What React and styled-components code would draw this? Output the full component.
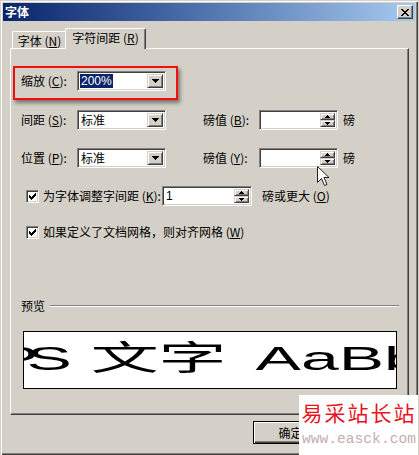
import React from "react";
import styled, { createGlobalStyle } from "styled-components";

const GlobalStyle = createGlobalStyle`
  html, body { margin: 0; padding: 0; background: #d4d0c8; }
  body {
    font-family: "Noto Sans CJK SC", "Liberation Sans", sans-serif;
    font-size: 12px;
    color: #000;
  }
  #root { width: 419px; height: 455px; overflow: hidden; }
`;

const Window = styled.div`
  position: relative;
  box-sizing: border-box;
  width: 418px;
  height: 455px;
  padding: 3px 3px 0 3px;
  background: #d4d0c8;
  box-shadow: inset 1px 1px 0 #d4d0c8, inset 2px 2px 0 #fff,
    inset -1px -1px 0 #404040, inset -2px -2px 0 #808080;
  display: flex;
  flex-direction: column;
  overflow: hidden;
`;

const TitleBar = styled.div`
  height: 18px;
  flex: none;
  display: flex;
  align-items: center;
  justify-content: space-between;
  padding: 0 2px 0 2px;
  background: linear-gradient(to right, #0a246a 0%, #3a5c9c 35%, #a6caf0 100%);
`;

const Title = styled.span`
  color: #fff;
  font-weight: bold;
  font-size: 12px;
  line-height: 18px;
`;

const CloseBtn = styled.div`
  box-sizing: border-box;
  width: 16px;
  height: 14px;
  background: #d4d0c8;
  border: 1px solid;
  border-color: #fff #404040 #404040 #fff;
  box-shadow: inset -1px -1px 0 #808080;
  display: flex;
  align-items: center;
  justify-content: center;
`;

const Body = styled.div`
  flex: 1;
  display: flex;
  flex-direction: column;
  padding: 7px 0 0 7px;
`;

const TabStrip = styled.div`
  display: flex;
  align-items: flex-start;
  height: 20px;
  padding-left: 2px;
  position: relative;
  z-index: 2;
`;

const Tab = styled.div`
  box-sizing: border-box;
  width: ${(p) => p.$w}px;
  height: ${(p) => (p.$active ? 21 : 17)}px;
  margin-top: ${(p) => (p.$active ? 0 : 3)}px;
  margin-left: ${(p) => (p.$active ? -2 : 0)}px;
  padding-bottom: ${(p) => (p.$active ? 3 : 0)}px;
  background: #d4d0c8;
  border-top: 1px solid #fff;
  border-left: 1px solid #fff;
  border-right: 1px solid #404040;
  box-shadow: inset -1px 0 0 #808080;
  border-radius: 2px 2px 0 0;
  display: flex;
  align-items: center;
  justify-content: center;
  white-space: nowrap;
  position: relative;
  z-index: ${(p) => (p.$active ? 3 : 1)};
`;

const Panel = styled.div`
  position: relative;
  z-index: 1;
  box-sizing: border-box;
  width: 399px;
  height: 367px;
  border-top: 1px solid #fff;
  border-left: 1px solid #fff;
  border-right: 1px solid #404040;
  border-bottom: 1px solid #404040;
  box-shadow: inset -1px -1px 0 #808080;
  padding: 22px 9px 0 10px;
  display: flex;
  flex-direction: column;
`;

const Highlight = styled.div`
  position: absolute;
  left: 2px;
  top: 17px;
  width: 165px;
  height: 34px;
  box-sizing: border-box;
  border: 2px solid #f01010;
  box-shadow: 2px 3px 4px rgba(0, 0, 0, 0.45);
  pointer-events: none;
`;

const Row = styled.div`
  display: flex;
  align-items: center;
  height: 20px;
  margin-top: ${(p) => p.$mt || 0}px;
  padding-left: ${(p) => p.$indent || 0}px;
  white-space: nowrap;
`;

const Label = styled.span`
  flex: none;
  width: ${(p) => (p.$w ? `${p.$w}px` : "auto")};
  margin-left: ${(p) => p.$ml || 0}px;
  white-space: nowrap;
  line-height: 14px;
`;

const Sunken = styled.div`
  box-sizing: border-box;
  flex: none;
  width: ${(p) => p.$w}px;
  height: 20px;
  margin-left: ${(p) => p.$ml || 0}px;
  background: #fff;
  border: 1px solid;
  border-color: #808080 #fff #fff #808080;
  box-shadow: inset 1px 1px 0 #404040, inset -1px -1px 0 #d4d0c8;
  display: flex;
  align-items: stretch;
  padding: 2px;
`;

const FieldText = styled.span`
  display: flex;
  align-items: center;
  padding: 0 1px;
  line-height: 14px;
  font-family: "Liberation Sans", "Noto Sans CJK SC", sans-serif;
  background: ${(p) => (p.$selected ? "#0a246a" : "transparent")};
  color: ${(p) => (p.$selected ? "#fff" : "#000")};
  font-size: 12px;
`;

const FieldCJK = styled(FieldText)`
  font-family: "Noto Sans CJK SC", sans-serif;
`;

const RaisedBtn = styled.div`
  box-sizing: border-box;
  background: #d4d0c8;
  border: 1px solid;
  border-color: #d4d0c8 #404040 #404040 #d4d0c8;
  box-shadow: inset 1px 1px 0 #fff, inset -1px -1px 0 #808080;
  display: flex;
  align-items: center;
  justify-content: center;
`;

const DropBtn = styled(RaisedBtn)`
  width: 16px;
  margin-left: auto;
`;

const SpinCol = styled.div`
  width: 15px;
  margin-left: auto;
  display: flex;
  flex-direction: column;
`;

const SpinBtn = styled(RaisedBtn)`
  flex: 1;
`;

const Check = styled.div`
  box-sizing: border-box;
  flex: none;
  width: 13px;
  height: 13px;
  background: #fff;
  border: 1px solid;
  border-color: #808080 #fff #fff #808080;
  box-shadow: inset 1px 1px 0 #404040, inset -1px -1px 0 #d4d0c8;
  display: flex;
  align-items: center;
  justify-content: center;
  margin-right: 4px;
`;

const Legend = styled.div`
  display: flex;
  align-items: center;
  height: 14px;
  margin-top: 56px;
`;

const Rule = styled.div`
  flex: 1;
  margin-left: 5px;
  margin-top: 2px;
  border-top: 1px solid #808080;
  border-bottom: 1px solid #fff;
`;

const Preview = styled.div`
  box-sizing: border-box;
  width: 374px;
  height: 58px;
  margin: 19px 0 0 2px;
  background: #fff;
  border: 1px solid #000;
  overflow: hidden;
  display: flex;
  align-items: center;
`;

const PreviewText = styled.span`
  flex: none;
  white-space: pre;
  font-family: "Liberation Sans", "Noto Sans CJK SC", sans-serif;
  font-size: 34px;
  line-height: 40px;
  height: 40px;
  transform: scaleX(2);
  transform-origin: 0 50%;
  margin-left: -31px;
  margin-bottom: 8px;
`;

const Tight = styled.span`
  letter-spacing: -6px;
`;

const PreviewCJK = styled.span`
  font-family: "Noto Sans CJK SC", sans-serif;
  font-size: 34px;
`;

const PreviewLatin = styled.span`
  margin-left: 5px;
`;

const ButtonRow = styled.div`
  display: flex;
  justify-content: flex-end;
  gap: 6px;
  width: 399px;
  margin-top: 6px;
`;

const PushBtn = styled.div`
  box-sizing: border-box;
  width: 75px;
  height: 23px;
  background: #d4d0c8;
  border: 1px solid #000;
  box-shadow: inset 1px 1px 0 #fff, inset -1px -1px 0 #404040,
    inset -2px -2px 0 #808080;
  display: flex;
  align-items: center;
  justify-content: center;
`;

const Watermark = styled.div`
  position: absolute;
  left: 299px;
  top: 395px;
  width: 120px;
  height: 60px;
  background: #fff;
  display: flex;
  flex-direction: column;
  align-items: center;
  z-index: 5;
`;

const WmTitle = styled.div`
  margin-top: 4px;
  color: #e8141e;
  font-family: "Noto Sans CJK SC", sans-serif;
  font-size: 21px;
  line-height: 26px;
  letter-spacing: 2px;
`;

const WmUrl = styled.div`
  margin-top: 6px;
  color: #c4aeb0;
  font-family: "Liberation Mono", "DejaVu Sans Mono", monospace;
  font-size: 14.6px;
  line-height: 16px;
  white-space: nowrap;
`;

const Cursor = styled.svg`
  position: absolute;
  left: 317px;
  top: 166px;
  z-index: 6;
`;

const Key = ({ k }) => (
  <>
    {" "}(<u>{k}</u>)
  </>
);

const DownArrow = ({ w = 7, h = 4 }) => (
  <svg width={w} height={h} viewBox={`0 0 ${w} ${h}`} shapeRendering="crispEdges">
    <polygon points={`0,0 ${w},0 ${w / 2},${h}`} fill="#000" />
  </svg>
);

const UpArrow = ({ w = 5, h = 3 }) => (
  <svg width={w} height={h} viewBox={`0 0 ${w} ${h}`} shapeRendering="crispEdges">
    <polygon points={`0,${h} ${w},${h} ${w / 2},0`} fill="#000" />
  </svg>
);

const ComboBox = ({ children }) => (
  <Sunken $w={89}>
    {children}
    <DropBtn>
      <DownArrow />
    </DropBtn>
  </Sunken>
);

const SpinBox = ({ w, ml, children }) => (
  <Sunken $w={w} $ml={ml}>
    {children}
    <SpinCol>
      <SpinBtn>
        <UpArrow />
      </SpinBtn>
      <SpinBtn>
        <DownArrow w={5} h={3} />
      </SpinBtn>
    </SpinCol>
  </Sunken>
);

const CheckBox = () => (
  <Check>
    <svg width="7" height="7" viewBox="0 0 7 7" shapeRendering="crispEdges">
      <path d="M0 2h1v1h1v1h1v-1h1v-1h1v-1h1v-1h1v3h-1v1h-1v1h-1v1h-1v1h-1v-1h-1v-1h-1z" fill="#000" />
    </svg>
  </Check>
);

export default function App() {
  return (
    <>
      <GlobalStyle />
      <Window>
        <TitleBar>
          <Title>字体</Title>
          <CloseBtn>
            <svg width="8" height="7" viewBox="0 0 8 7" shapeRendering="crispEdges">
              <path d="M0 0h2v1h1v1h2v-1h1v-1h2v1h-1v1h-1v1h-1v1h1v1h1v1h1v1h-2v-1h-1v-1h-2v1h-1v1h-2v-1h1v-1h1v-1h1v-1h-1v-1h-1v-1h-1z" fill="#000" />
            </svg>
          </CloseBtn>
        </TitleBar>
        <Body>
          <TabStrip>
            <Tab $w={55}>
              字体<Key k="N" />
            </Tab>
            <Tab $w={81} $active>
              字符间距<Key k="R" />
            </Tab>
          </TabStrip>
          <Panel>
            <Highlight />
            <Row>
              <Label $w={56}>
                缩放<Key k="C" />:
              </Label>
              <ComboBox>
                <FieldText $selected>200%</FieldText>
              </ComboBox>
            </Row>
            <Row $mt={19}>
              <Label $w={56}>
                间距<Key k="S" />:
              </Label>
              <ComboBox>
                <FieldCJK>标准</FieldCJK>
              </ComboBox>
              <Label $w={56} $ml={37}>
                磅值<Key k="B" />:
              </Label>
              <SpinBox w={79} />
              <Label $ml={5}>磅</Label>
            </Row>
            <Row $mt={18}>
              <Label $w={56}>
                位置<Key k="P" />:
              </Label>
              <ComboBox>
                <FieldCJK>标准</FieldCJK>
              </ComboBox>
              <Label $w={56} $ml={37}>
                磅值<Key k="Y" />:
              </Label>
              <SpinBox w={79} />
              <Label $ml={5}>磅</Label>
            </Row>
            <Row $mt={18} $indent={5}>
              <CheckBox />
              <Label $w={119}>
                为字体调整字间距<Key k="K" />:
              </Label>
              <SpinBox w={90}>
                <FieldText>1</FieldText>
              </SpinBox>
              <Label $ml={10}>
                磅或更大<Key k="O" />
              </Label>
            </Row>
            <Row $mt={16} $indent={5}>
              <CheckBox />
              <Label>
                如果定义了文档网格，则对齐网格<Key k="W" />
              </Label>
            </Row>
            <Legend>
              <span>预览</span>
              <Rule />
            </Legend>
            <Preview>
              <PreviewText>
                <Tight>P</Tight>
                {"S "}
                <PreviewCJK>文字</PreviewCJK>
                {" "}
                <PreviewLatin>AaBb</PreviewLatin>
              </PreviewText>
            </Preview>
          </Panel>
          <ButtonRow>
            <PushBtn>确定</PushBtn>
            <PushBtn>取消</PushBtn>
          </ButtonRow>
        </Body>
        <Watermark>
          <WmTitle>易采站长站</WmTitle>
          <WmUrl>www.easck.com</WmUrl>
        </Watermark>
        <Cursor width="13" height="21" viewBox="0 0 13 21">
          <path
            d="M0.5 0.5 L0.5 16.5 L4.5 12.5 L7.5 19.5 L10 18.5 L7 11.5 L12 11.5 Z"
            fill="#fff"
            stroke="#222"
            strokeWidth="1"
          />
        </Cursor>
      </Window>
    </>
  );
}
